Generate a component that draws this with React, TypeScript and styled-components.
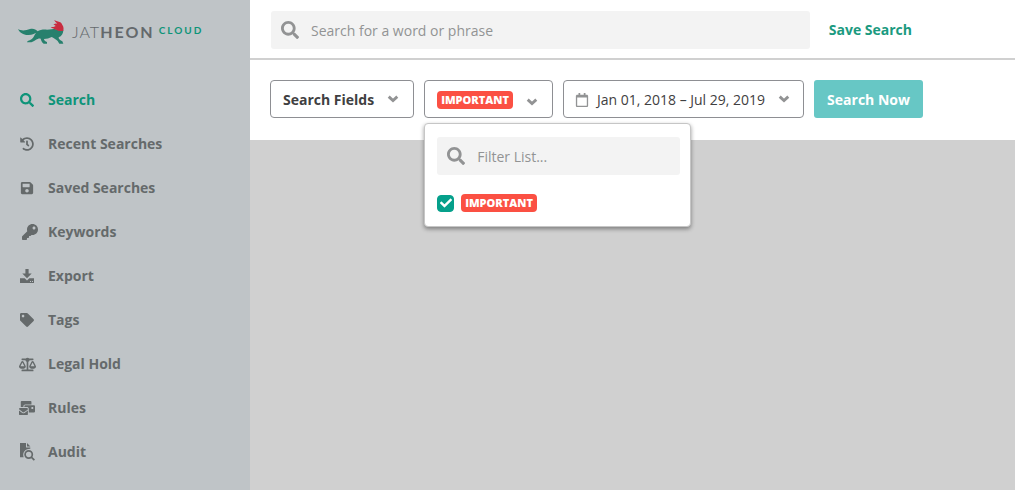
import React, { useState } from "react";
import styled, { createGlobalStyle, css } from "styled-components";
import {
  FaBalanceScale,
  FaCheck,
  FaHistory,
  FaKey,
  FaMailBulk,
  FaRegCalendar,
  FaSave,
  FaSearch,
  FaTag,
} from "react-icons/fa";

const color = {
  teal: "#0e9479",
  link: "#1b9a80",
  check: "#05a08b",
  aqua: "#67c7c5",
  red: "#fb5043",
  ink: "#3f4041",
  nav: "#656a6b",
  muted: "#929394",
  line: "#8e8f93",
  field: "#f3f3f3",
  canvas: "#d0d0d0",
  sidebar: "#bfc4c7",
};

const GlobalStyle = createGlobalStyle`
  * { box-sizing: border-box; }
  body {
    margin: 0;
    background: ${color.canvas};
    color: ${color.ink};
    font: 14px/20px "Open Sans", sans-serif;
  }
  button, input { font: inherit; color: inherit; }
`;

const Page = styled.div`
  display: flex;
  min-height: 100vh;
`;

const Sidebar = styled.aside`
  flex: 0 0 250px;
  background: ${color.sidebar};
`;

const Brand = styled.a`
  display: flex;
  align-items: center;
  height: 64px;
  padding-left: 18px;
  color: #64696c;
  text-decoration: none;
  font-family: Lato, sans-serif;
`;

const Wordmark = styled.span`
  margin-left: 8px;
  font-size: 16px;
  font-weight: 300;
  letter-spacing: 1px;

  b {
    font-weight: 700;
    letter-spacing: 2px;
  }
`;

const Edition = styled.span`
  margin: 0 0 4px 4px;
  color: ${color.teal};
  font-size: 10px;
  font-weight: 700;
  letter-spacing: 2px;
`;

const NavList = styled.ul`
  margin: 0;
  padding: 14px 0 0;
  list-style: none;
`;

const NavLink = styled.a<{ $active?: boolean }>`
  display: flex;
  align-items: center;
  gap: 10px;
  height: 44px;
  padding-left: 16px;
  color: ${(p) => (p.$active ? color.teal : color.nav)};
  font-weight: 700;
  text-decoration: none;
`;

const NavIcon = styled.span<{ $end?: boolean }>`
  display: flex;
  justify-content: ${(p) => (p.$end ? "flex-end" : "center")};
  width: 22px;
`;

const Main = styled.main`
  flex: 1;
  min-width: 0;
`;

const SearchBar = styled.header`
  display: flex;
  align-items: center;
  gap: 19px;
  padding: 11px 103px 9px 21px;
  background: #fff;
  border-bottom: 2px solid ${color.canvas};
`;

const Field = styled.label<{ $grow?: boolean }>`
  display: flex;
  align-items: center;
  gap: 12px;
  height: 38px;
  padding: 0 10px;
  border-radius: 3px;
  background: ${color.field};
  color: ${color.muted};
  ${(p) => p.$grow && css`flex: 1; min-width: 0;`}

  svg {
    flex: none;
  }
`;

const FieldInput = styled.input`
  flex: 1;
  min-width: 0;
  padding: 2px 0 0;
  border: 0;
  outline: 0;
  background: none;
  color: ${color.ink};

  &::placeholder {
    color: ${color.muted};
    opacity: 1;
  }
`;

const TextButton = styled.button`
  padding: 0;
  border: 0;
  background: none;
  color: ${color.link};
  font-weight: 700;
  white-space: nowrap;
  cursor: pointer;
`;

const Filters = styled.section`
  display: flex;
  flex-wrap: wrap;
  gap: 10px;
  padding: 20px 20px 22px;
  background: #fff;
`;

const FilterButton = styled.button<{ $strong?: boolean }>`
  display: flex;
  align-items: center;
  height: 38px;
  padding: 2px 12px 0;
  border: 1px solid ${color.line};
  border-radius: 4px;
  background: #fff;
  font-weight: ${(p) => (p.$strong ? 700 : 400)};
  white-space: nowrap;
  cursor: pointer;
`;

const DateButton = styled(FilterButton)`
  padding: 2px 11px 0;
`;

const ChevronIcon = styled.svg<{ $low?: boolean }>`
  margin: ${(p) => (p.$low ? "4px 2px 0 13px" : "0 2px 2px 13px")};
  color: ${color.muted};
`;

const CalendarIcon = styled(FaRegCalendar)`
  margin-right: 8px;
  color: ${color.muted};
`;

const PrimaryButton = styled.button`
  height: 38px;
  padding: 2px 13px 0;
  border: 0;
  border-radius: 3px;
  background: ${color.aqua};
  color: #fff;
  font-weight: 700;
  white-space: nowrap;
  cursor: pointer;
`;

const Badge = styled.span`
  padding: 0 4px;
  border-radius: 4px;
  background: ${color.red};
  color: #fff;
  font-size: 11px;
  font-weight: 800;
  line-height: 18px;
`;

const TagFilter = styled.div`
  position: relative;
`;

const Menu = styled.div`
  position: absolute;
  top: 43px;
  left: 0;
  width: 267px;
  padding: 13px 10px 14px 12px;
  border: 1px solid #c6c6c6;
  border-radius: 4px;
  background: #fff;
  box-shadow: 0 2px 4px rgba(0, 0, 0, 0.4);
`;

const Option = styled.label`
  display: flex;
  align-items: center;
  gap: 7px;
  margin-top: 19px;
  cursor: pointer;
`;

const CheckWrap = styled.span`
  display: grid;
  place-items: center;
  width: 17px;
  height: 17px;

  > * {
    grid-area: 1 / 1;
  }

  svg {
    color: #fff;
    pointer-events: none;
    z-index: 1;
  }
`;

const CheckInput = styled.input`
  appearance: none;
  width: 17px;
  height: 17px;
  margin: 0;
  border: 1px solid ${color.muted};
  border-radius: 4px;

  &:checked {
    border-color: ${color.check};
    background: ${color.check};
  }
`;

function Chevron({ low }: { low?: boolean }) {
  return (
    <ChevronIcon $low={low} width="12" height="8" viewBox="0 0 12 8" aria-hidden="true">
      <path d="M1.700 1.600L6 5.600L10.300 1.600" fill="none" stroke="currentColor" strokeWidth="2.800" />
    </ChevronIcon>
  );
}

function Fox() {
  return (
    <svg width="46" height="26" viewBox="0 0 138 78" aria-hidden="true">
      <path
        fill="#27806d"
        d="M0 30C12 37 24 34 36 30C46 27 53 31 59 37C65 33 75 31 87 32C97 32 105 30 112 30C120 35 129 35 136 33C136 44 131 51 122 55C121 60 127 64 133 67L136 74H124L119 66C113 60 107 57 101 54C94 58 86 60 78 60C78 64 82 67 87 69V74H77C72 70 69 64 68 59C63 57 59 60 54 62C48 66 43 70 35 70H27L29 66C38 65 44 59 48 52C49 48 52 44 55 41C48 43 43 48 32 48C17 49 5 41 0 30Z"
      />
      <path
        fill="#c82d40"
        d="M109 3C114 6 121 7 127 10C131 12 132 17 135 21C137 26 137 31 136 35C128 37 120 36 114 32C109 30 103 28 98 24C104 24 109 24 113 21L106 15C110 15 114 15 117 13C113 10 110 7 109 3Z"
      />
    </svg>
  );
}

function ExportIcon() {
  return (
    <svg width="14" height="14" viewBox="0 0 14 14" fill="currentColor" aria-hidden="true">
      <path d="M5.400 0h3.200v4.600h3.100L7 9.200 2.300 4.600h3.100z" />
      <path
        fillRule="evenodd"
        d="M0 9.300h4.700L7 11.400 9.300 9.300H14V14H0zM10 12v1h1v-1zM12 12v1h1v-1z"
      />
    </svg>
  );
}

function AuditIcon() {
  return (
    <svg width="16" height="18" viewBox="0 0 16 18" fill="currentColor" aria-hidden="true">
      <path d="M1 0h6v4.400h4.300v1.300C7 5.600 4.200 8.500 4.200 12c0 .8.200 1.600.5 2.300H1z" />
      <path d="M8 0l3.400 3.400H8z" />
      <path
        fill="none"
        stroke="currentColor"
        strokeWidth="1.700"
        d="M13.300 11.500a3.600 3.600 0 1 1-7.200 0a3.600 3.600 0 0 1 7.200 0zM12.300 14.100l3.100 3.100"
      />
    </svg>
  );
}

const navItems = [
  { label: "Search", icon: <FaSearch size={14} />, active: true },
  { label: "Recent Searches", icon: <FaHistory size={14} /> },
  { label: "Saved Searches", icon: <FaSave size={14} /> },
  { label: "Keywords", icon: <FaKey size={16} />, end: true },
  { label: "Export", icon: <ExportIcon /> },
  { label: "Tags", icon: <FaTag size={14} /> },
  { label: "Legal Hold", icon: <FaBalanceScale size={17} /> },
  { label: "Rules", icon: <FaMailBulk size={16} /> },
  { label: "Audit", icon: <AuditIcon /> },
];

export default function App() {
  const [important, setImportant] = useState(true);

  return (
    <>
      <GlobalStyle />
      <Page>
        <Sidebar>
          <Brand href="#">
            <Fox />
            <Wordmark>
              JAT<b>HEON</b>
            </Wordmark>
            <Edition>CLOUD</Edition>
          </Brand>
          <nav>
            <NavList>
              {navItems.map((item) => (
                <li key={item.label}>
                  <NavLink href="#" $active={item.active}>
                    <NavIcon $end={item.end}>{item.icon}</NavIcon>
                    {item.label}
                  </NavLink>
                </li>
              ))}
            </NavList>
          </nav>
        </Sidebar>
        <Main>
          <SearchBar>
            <Field $grow>
              <FaSearch size={18} />
              <FieldInput
                type="text"
                aria-label="Search for a word or phrase"
                placeholder="Search for a word or phrase"
              />
            </Field>
            <TextButton type="button">Save Search</TextButton>
          </SearchBar>
          <Filters>
            <FilterButton type="button" $strong>
              Search Fields
              <Chevron />
            </FilterButton>
            <TagFilter>
              <FilterButton type="button" aria-expanded="true">
                <Badge>IMPORTANT</Badge>
                <Chevron low />
              </FilterButton>
              <Menu>
                <Field>
                  <FaSearch size={18} />
                  <FieldInput type="text" aria-label="Filter List" placeholder="Filter List..." />
                </Field>
                <Option>
                  <CheckWrap>
                    <CheckInput
                      type="checkbox"
                      checked={important}
                      onChange={(e) => setImportant(e.target.checked)}
                    />
                    {important && <FaCheck size={12} />}
                  </CheckWrap>
                  <Badge>IMPORTANT</Badge>
                </Option>
              </Menu>
            </TagFilter>
            <DateButton type="button">
              <CalendarIcon size={14} />
              Jan 01, 2018 – Jul 29, 2019
              <Chevron />
            </DateButton>
            <PrimaryButton type="button">Search Now</PrimaryButton>
          </Filters>
        </Main>
      </Page>
    </>
  );
}
